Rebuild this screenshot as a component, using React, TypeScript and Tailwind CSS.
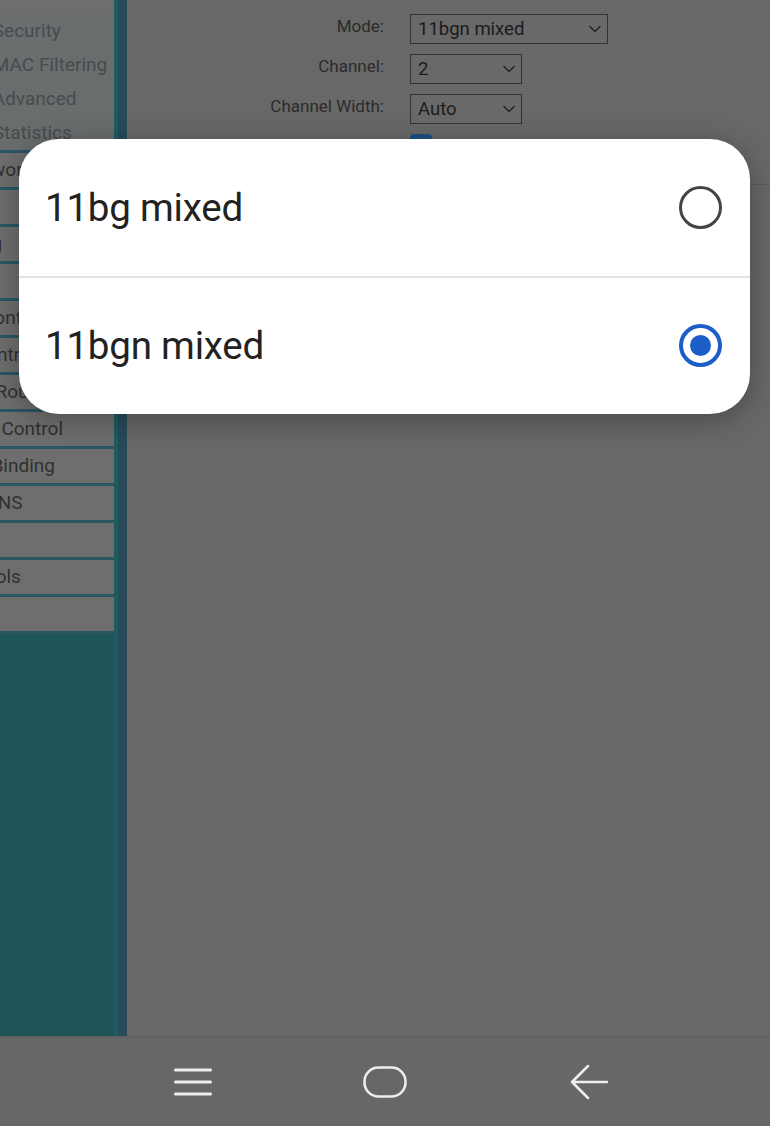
import React from "react";

const font = { fontFamily: "Roboto, 'Noto Sans', Arial, sans-serif" };

function SubItem({ label }: { label: string }) {
  return (
    <div className="h-[34px] flex items-center whitespace-nowrap">
      <span className="-ml-[94px] text-[19px] text-[#464b4c]">{label}</span>
    </div>
  );
}

function Item({ label }: { label: string }) {
  return (
    <div className="h-[37px] flex items-center whitespace-nowrap border-b-[3px] border-[#2b5663]">
      <span className="-ml-[93px] text-[19px] text-[#2f3131]">{label}</span>
    </div>
  );
}

function Chevron() {
  return (
    <svg width="12" height="8" viewBox="0 0 12 8" fill="none">
      <path d="M1 1.5 L6 6.5 L11 1.5" stroke="#262626" strokeWidth="1.5" strokeLinecap="round" strokeLinejoin="round" />
    </svg>
  );
}

function Select({ value, w }: { value: string; w: string }) {
  return (
    <div className={`${w} h-[30px] border border-[#333333] bg-[#696969] flex items-center justify-between pl-[7px] pr-[6px]`}>
      <span className="text-[18.5px] text-[#1b1b1b] leading-none">{value}</span>
      <Chevron />
    </div>
  );
}

export default function App() {
  const items = [
    "Guest Network",
    "DHCP",
    "Forwarding",
    "Security",
    "Parental Controls",
    "Access Control",
    "Advanced Routing",
    "Bandwidth Control",
    "IP & MAC Binding",
    "Dynamic DNS",
    "IPv6",
    "System Tools",
    "Logout",
  ];
  return (
    <div className="relative w-[770px] h-[1126px] overflow-hidden flex flex-col bg-[#686868]" style={font}>
      <div className="flex h-[1036px]">
        {/* Sidebar */}
        <aside className="w-[127px] flex bg-[#1f5459]">
          <div className="w-[114px] self-start flex flex-col overflow-hidden bg-[#6e6e6e]">
            <div className="h-[14px]" />
            <div className="bg-[#6a6d6e]">
              <SubItem label="- Wireless Security" />
              <SubItem label="- Wireless MAC Filtering" />
              <SubItem label="- Wireless Advanced" />
              <SubItem label="- Wireless Statistics" />
            </div>
            <div className="h-[3px] bg-[#2b5663]" />
            {items.map((l) => (
              <Item key={l} label={l} />
            ))}
          </div>
          <div className="w-[13px] flex">
            <div className="w-[4px] bg-[#1c5e60]" />
            <div className="flex-1 bg-[#274b59]" />
          </div>
        </aside>

        {/* Main content */}
        <main className="flex-1 flex flex-col">
          <div className="flex flex-col gap-[10px] pt-[14px] h-[184px]">
            <div className="flex items-start">
              <div className="w-[257px] text-right text-[17px] leading-[24px] text-[#2b2b2b]">Mode:</div>
              <div className="ml-[26px]"><Select value="11bgn mixed" w="w-[198px]" /></div>
            </div>
            <div className="flex items-start">
              <div className="w-[257px] text-right text-[17px] leading-[24px] text-[#2b2b2b]">Channel:</div>
              <div className="ml-[26px]"><Select value="2" w="w-[112px]" /></div>
            </div>
            <div className="flex items-start">
              <div className="w-[257px] text-right text-[17px] leading-[24px] text-[#2b2b2b]">Channel Width:</div>
              <div className="ml-[26px]"><Select value="Auto" w="w-[112px]" /></div>
            </div>
            <div className="flex items-start">
              <div className="w-[257px]" />
              <div className="ml-[26px] w-[22px] h-[22px] rounded-[4px] bg-[#1f4f82]" />
            </div>
          </div>
          <div className="h-[1px] bg-[#5c5c5c]" />
          <div className="flex-1" />
        </main>
      </div>

      {/* Navigation bar */}
      <nav className="h-[90px] border-t-2 border-[#606060] bg-[#676767] flex items-center pl-[174px]">
        <svg width="38" height="28" viewBox="0 0 38 28" fill="none">
          <path d="M1.5 2 H36.5 M1.5 14 H36.5 M1.5 26 H36.5" stroke="#eeeeee" strokeWidth="3" strokeLinecap="round" />
        </svg>
        <svg className="ml-[151px]" width="44" height="32" viewBox="0 0 44 32" fill="none">
          <rect x="1.5" y="1.5" width="41" height="29" rx="14" stroke="#eeeeee" strokeWidth="2.5" />
        </svg>
        <svg className="ml-[162px]" width="40" height="36" viewBox="0 0 40 36" fill="none">
          <path d="M38 18 H3 M19 2 L3 18 L19 34" stroke="#eeeeee" strokeWidth="2.5" strokeLinecap="round" strokeLinejoin="round" />
        </svg>
      </nav>

      {/* Dialog */}
      <div className="absolute left-[19px] top-[139px] w-[731px] h-[275px] bg-white rounded-[40px] shadow-[0_6px_30px_rgba(0,0,0,0.3)] flex flex-col overflow-hidden">
        <div className="h-[137px] flex items-center justify-between pl-[26px] pr-[28px]">
          <span className="text-[38.5px] text-[#222222] tracking-[-0.2px]">11bg mixed</span>
          <div className="w-[43px] h-[43px] rounded-full border-[3.5px] border-[#444444]" />
        </div>
        <div className="h-[1.5px] bg-[#e3e3e3]" />
        <div className="flex-1 flex items-center justify-between pl-[26px] pr-[28px]">
          <span className="text-[38.5px] text-[#222222] tracking-[-0.2px]">11bgn mixed</span>
          <div className="w-[43px] h-[43px] rounded-full border-[4px] border-[#1a5ec6] flex items-center justify-center">
            <div className="w-[21px] h-[21px] rounded-full bg-[#1a5ec6]" />
          </div>
        </div>
      </div>
    </div>
  );
}
